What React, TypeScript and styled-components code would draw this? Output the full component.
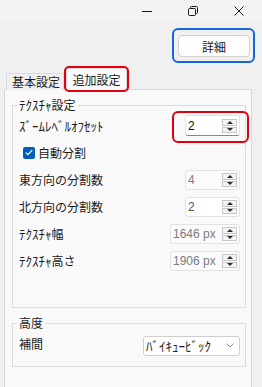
import { createGlobalStyle, styled } from 'styled-components';

const GlobalStyle = createGlobalStyle`
  html, body {
    margin: 0;
    padding: 0;
  }
  body {
    background: #f0f0f0;
    font-family: 'Noto Sans CJK JP', 'Noto Sans', sans-serif;
    font-size: 12px;
    color: #1b1b1b;
  }
`;

const Window = styled.div`
  width: 262px;
  height: 387px;
  overflow: hidden;
  display: flex;
  flex-direction: column;
  background: #f0f0f0;
`;

const TitleBar = styled.div`
  height: 22px;
  flex: none;
  display: flex;
  justify-content: flex-end;
  background: #f3f3f3;
`;

const CaptionButton = styled.div`
  width: 46px;
  display: flex;
  align-items: center;
  justify-content: center;
  color: #1a1a1a;
`;

const ActionRow = styled.div`
  display: flex;
  justify-content: flex-end;
  padding: 6px 7px 0 0;
`;

const FocusRing = styled.div`
  border: 2px solid #1565e0;
  border-radius: 6px;
  padding: 5px 3px 4px 4px;
`;

const Button = styled.button`
  display: block;
  width: 72px;
  height: 22px;
  padding: 0;
  border: 1px solid #d1d1d1;
  border-radius: 4px;
  background: #fdfdfd;
  font: inherit;
  color: #1b1b1b;
`;

const TabStrip = styled.div`
  display: flex;
  align-items: flex-end;
  margin: 5px 0 -1px 6px;
`;

const Tab = styled.div<{ $active?: boolean }>`
  position: relative;
  z-index: ${(p) => (p.$active ? 1 : 0)};
  box-sizing: border-box;
  height: ${(p) => (p.$active ? 22 : 17)}px;
  width: ${(p) => (p.$active ? 61 : 58)}px;
  margin-left: ${(p) => (p.$active ? 2 : 0)}px;
  padding: ${(p) => (p.$active ? '0' : '0 0 0 5px')};
  display: flex;
  align-items: center;
  justify-content: ${(p) => (p.$active ? 'center' : 'flex-start')};
  border: 1px solid #d9d9d9;
  border-bottom: none;
  border-radius: ${(p) => (p.$active ? '3px' : '0')};
  background: ${(p) => (p.$active ? '#f9f9f9' : '#f0f0f0')};
  outline: ${(p) => (p.$active ? '2px solid #e00010' : 'none')};
  line-height: 14px;
`;

const Page = styled.div`
  flex: 1;
  box-sizing: border-box;
  width: 248px;
  margin-left: 4px;
  padding: 8px 5px 0 7px;
  border: 1px solid #dadada;
  border-bottom: none;
  background: #f9f9f9;
`;

const Group = styled.fieldset<{ $padBottom: number }>`
  margin: 0;
  min-width: 0;
  border: 1px solid #dcdcdc;
  padding: 0 5px ${(p) => p.$padBottom}px 6px;
  & + & {
    margin-top: 8px;
  }
`;

const Legend = styled.legend`
  margin-left: -2px;
  padding: 0 2px;
  line-height: 14px;
`;

const Row = styled.div`
  height: 27px;
  display: flex;
  align-items: center;
  justify-content: space-between;
`;

const CheckRow = styled(Row)`
  justify-content: flex-start;
  gap: 3px;
  padding-left: 4px;
`;

const Label = styled.span`
  line-height: 14px;
  white-space: nowrap;
`;

// half-width katakana render small in Noto, bump them up a touch
const Kana = styled.span`
  font-size: 13px;
`;

const CheckBox = styled.span`
  width: 12px;
  height: 12px;
  border-radius: 2px;
  background: #005fb8;
  display: inline-flex;
  align-items: center;
  justify-content: center;
`;

const Callout = styled.div`
  border: 2px solid #e00010;
  border-radius: 6px;
  padding: 2px 7px 5px 11px;
  margin: -1px -9px -4px 0;
`;

const Spinner = styled.div<{ $width: number; $height: number; $focused?: boolean; $disabled?: boolean }>`
  box-sizing: border-box;
  width: ${(p) => p.$width}px;
  height: ${(p) => p.$height}px;
  padding: 0 2px;
  display: flex;
  align-items: center;
  justify-content: space-between;
  background: ${(p) => (p.$disabled ? '#fbfbfb' : '#ffffff')};
  border: 1px solid #e2e2e2;
  border-bottom-color: ${(p) => (p.$focused ? '#8a8a8a' : '#e2e2e2')};
  border-radius: 3px;
`;

const Value = styled.span<{ $color: string }>`
  font-family: 'Liberation Sans', 'Noto Sans', sans-serif;
  font-size: 12px;
  color: ${(p) => p.$color};
`;

const SpinPair = styled.div`
  width: 15px;
  display: flex;
  flex-direction: column;
  gap: 1px;
`;

const SpinArrow = styled.div<{ $down?: boolean }>`
  box-sizing: border-box;
  height: ${(p) => (p.$down ? 6 : 7)}px;
  border: 1px solid #c6c6c6;
  background: #f4f4f4;
  display: flex;
  align-items: center;
  justify-content: center;
  &::after {
    content: '';
    border-left: 3px solid transparent;
    border-right: 3px solid transparent;
    ${(p) => (p.$down ? 'border-top: 3px solid #2a2a2a;' : 'border-bottom: 3px solid #2a2a2a;')}
  }
`;

const Select = styled.div`
  box-sizing: border-box;
  width: 97px;
  height: 20px;
  margin-top: 4px;
  padding: 0 5px 0 2px;
  display: flex;
  align-items: center;
  justify-content: space-between;
  background: #ffffff;
  border: 1px solid #cfcfcf;
  border-radius: 3px;
`;

type SpinRow = {
  kana?: string;
  label: string;
  value: string;
  width: number;
  color: string;
  disabled?: boolean;
};

const divisionRows: SpinRow[] = [
  { label: '東方向の分割数', value: '4', width: 55, color: '#8c7f72', disabled: true },
  { label: '北方向の分割数', value: '2', width: 55, color: '#555555' },
  { kana: 'ﾃｸｽﾁｬ', label: '幅', value: '1646 px', width: 70, color: '#7a7a86', disabled: true },
  { kana: 'ﾃｸｽﾁｬ', label: '高さ', value: '1906 px', width: 70, color: '#7a7a86', disabled: true },
];

function Spin({ value, width, color, height = 20, focused, disabled }: {
  value: string;
  width: number;
  color: string;
  height?: number;
  focused?: boolean;
  disabled?: boolean;
}) {
  return (
    <Spinner $width={width} $height={height} $focused={focused} $disabled={disabled}>
      <Value $color={color}>{value}</Value>
      <SpinPair>
        <SpinArrow />
        <SpinArrow $down />
      </SpinPair>
    </Spinner>
  );
}

export default function App() {
  return (
    <>
      <GlobalStyle />
      <Window>
        <TitleBar>
          <CaptionButton>
            <svg width="10" height="10" viewBox="0 0 10 10">
              <line x1="0" y1="5.5" x2="10" y2="5.5" stroke="currentColor" strokeWidth="1" />
            </svg>
          </CaptionButton>
          <CaptionButton>
            <svg width="10" height="10" viewBox="0 0 10 10" fill="none" stroke="currentColor" strokeWidth="1">
              <rect x="0.5" y="2.5" width="7" height="7" rx="1" />
              <path d="M2.5 2.5V1.5a1 1 0 0 1 1-1h5a1 1 0 0 1 1 1v5a1 1 0 0 1-1 1h-1" />
            </svg>
          </CaptionButton>
          <CaptionButton>
            <svg width="10" height="10" viewBox="0 0 10 10" stroke="currentColor" strokeWidth="1">
              <line x1="0.5" y1="0.5" x2="9.5" y2="9.5" />
              <line x1="9.5" y1="0.5" x2="0.5" y2="9.5" />
            </svg>
          </CaptionButton>
        </TitleBar>

        <ActionRow>
          <FocusRing>
            <Button>詳細</Button>
          </FocusRing>
        </ActionRow>

        <TabStrip>
          <Tab>基本設定</Tab>
          <Tab $active>追加設定</Tab>
        </TabStrip>

        <Page>
          <Group $padBottom={33}>
            <Legend>
              <Kana>ﾃｸｽﾁｬ</Kana>設定
            </Legend>
            <Row>
              <Label>
                <Kana>ｽﾞｰﾑﾚﾍﾞﾙｵﾌｾｯﾄ</Kana>
              </Label>
              <Callout>
                <Spin value="2" width={55} height={21} color="#111111" focused />
              </Callout>
            </Row>
            <CheckRow>
              <CheckBox>
                <svg width="8" height="7" viewBox="0 0 8 7" fill="none" stroke="#ffffff" strokeWidth="1.2">
                  <polyline points="0.8,3.6 3,5.6 7.2,1.2" />
                </svg>
              </CheckBox>
              <Label>自動分割</Label>
            </CheckRow>
            {divisionRows.map((r) => (
              <Row key={r.value + r.label}>
                <Label>
                  {r.kana && <Kana>{r.kana}</Kana>}
                  {r.label}
                </Label>
                <Spin value={r.value} width={r.width} color={r.color} disabled={r.disabled} />
              </Row>
            ))}
          </Group>

          <Group $padBottom={9}>
            <Legend>高度</Legend>
            <Row>
              <Label>補間</Label>
              <Select>
                <Label>
                  <Kana>ﾊﾞｲｷｭｰﾋﾞｯｸ</Kana>
                </Label>
                <svg width="8" height="5" viewBox="0 0 8 5" fill="none" stroke="#8a8a8a" strokeWidth="1">
                  <polyline points="0.5,0.5 4,4 7.5,0.5" />
                </svg>
              </Select>
            </Row>
          </Group>
        </Page>
      </Window>
    </>
  );
}
